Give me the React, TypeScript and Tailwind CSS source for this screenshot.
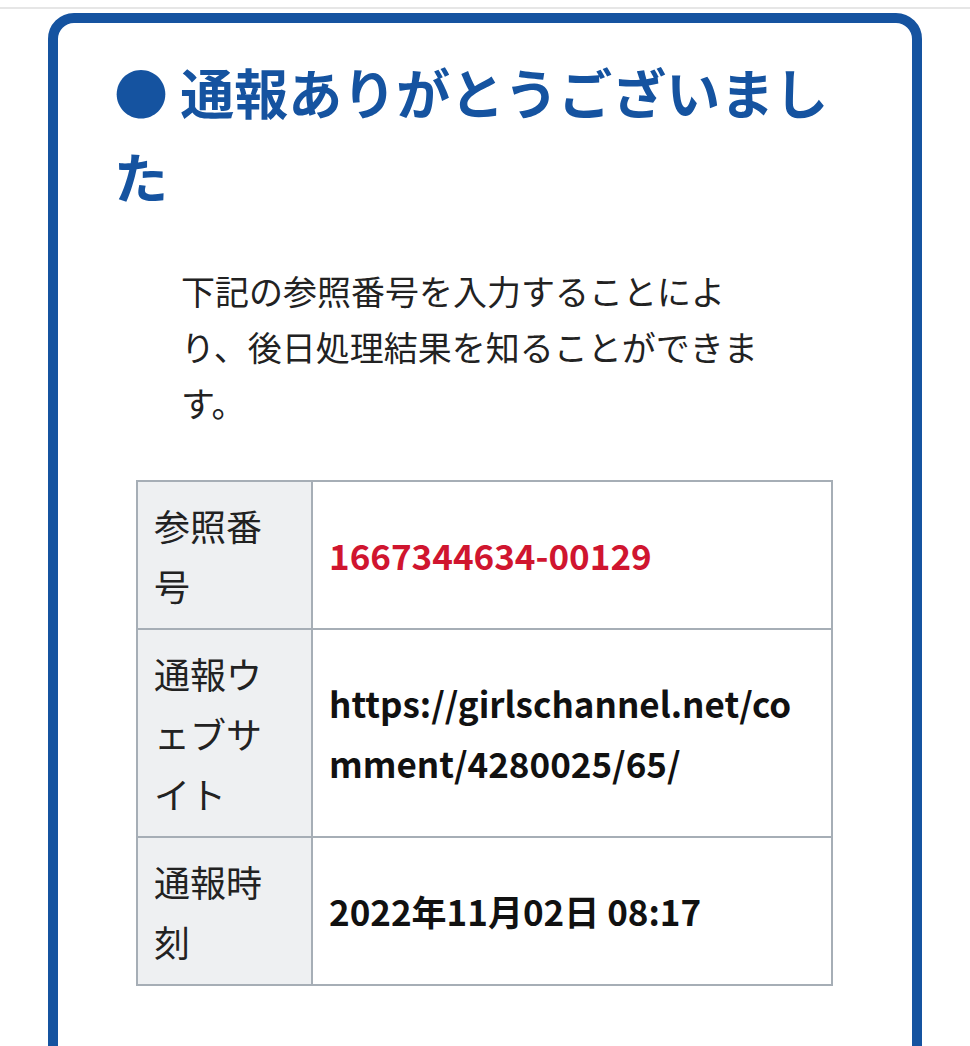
import React from "react";

const rows: { label: string; value: string; red?: boolean }[] = [
  { label: "参照番号", value: "1667344634-00129", red: true },
  { label: "通報ウェブサイト", value: "https://girlschannel.net/comment/4280025/65/" },
  { label: "通報時刻", value: "2022年11月02日 08:17" },
];

export default function App() {
  return (
    <div
      className="min-h-[1046px] bg-white overflow-hidden"
      style={{ fontFamily: '"Noto Sans CJK JP", "Noto Sans", sans-serif' }}
    >
      <div className="h-[7px]" />
      <div className="h-[2px] bg-[#e6e6e6]" />
      <div className="h-[4px]" />
      <div className="mx-[48px] border-[10px] border-[#1553a0] rounded-[26px] pt-[27px] pl-[56px] pr-[56px] pb-[200px]">
        <h1 className="text-[54px] leading-[84px] font-bold text-[#1553a0]">
          {"● 通報ありがとうございました"}
        </h1>
        <p className="mt-[45px] ml-[67px] w-[592px] text-[34px] leading-[56px] text-[#222]">
          下記の参照番号を入力することにより、後日処理結果を知ることができます。
        </p>
        <table className="mt-[49px] ml-[22px] w-[697px] border-collapse border-2 border-[#a6aeb6]">
          <tbody>
            {rows.map((r) => (
              <tr key={r.label}>
                <th className="w-[175px] border-2 border-[#a6aeb6] bg-[#eef0f2] px-[16px] py-[13px] text-left align-top text-[36px] leading-[60px] font-normal text-[#222]">
                  {r.label}
                </th>
                <td
                  className={`border-2 border-[#a6aeb6] bg-white px-[16px] py-[13px] align-middle text-[35px] leading-[60px] font-bold break-all ${
                    r.red ? "text-[#d0152f]" : "text-[#111]"
                  }`}
                >
                  {r.value}
                </td>
              </tr>
            ))}
          </tbody>
        </table>
      </div>
    </div>
  );
}
